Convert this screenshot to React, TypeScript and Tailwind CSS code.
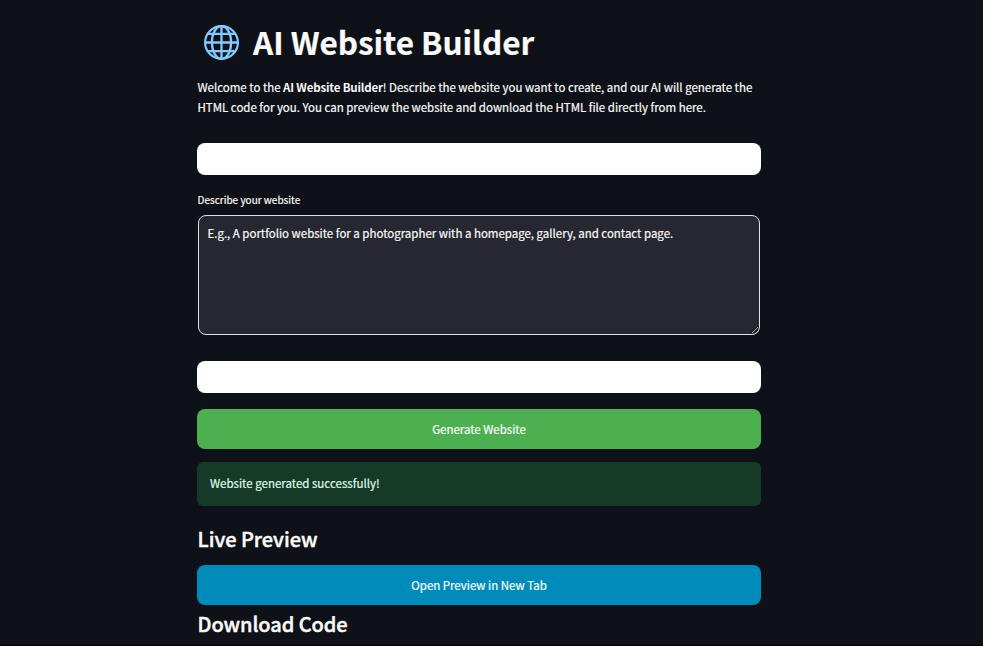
function Globe() {
  return (
    <svg className="mt-[2px] ml-[6px] h-[38px] w-[38px] shrink-0" viewBox="0 0 38 38" fill="none" stroke="#82caff" strokeWidth="2.3">
      <circle cx="18.5" cy="18.5" r="16.4" strokeWidth="2.2" />
      <ellipse cx="18.5" cy="18.5" rx="9.6" ry="16.4" />
      <path d="M18.5 2v33M2 18.5h33M5.2 9.9h26.6M5.2 27.1h26.6" />
    </svg>
  );
}

export default function App() {
  return (
    <div className="h-[646px] overflow-hidden border-b border-black bg-[#0e1117] font-['Noto_Sans_CJK_SC',sans-serif] text-[11.5px] tracking-[-0.018px] text-[#fafafa] [-webkit-text-stroke:0.2px]">
      <main className="ml-[197px] flex w-[564px] flex-col whitespace-nowrap">
        <h1 className="mt-[22px] flex h-10 items-center text-[31.5px] font-bold">
          <Globe />
          <span className="ml-3">AI Website Builder</span>
        </h1>
        <p className="mt-[15px] h-10 pl-[0.5px] leading-5">
          Welcome to the <strong className="font-bold tracking-[-0.17px] [-webkit-text-stroke:0px]">AI Website Builder</strong>! Describe the website you want to create, and our AI will generate the
          <br />
          HTML code for you. You can preview the website and download the HTML file directly from here.
        </p>
        <div className="mt-[26px] h-8 rounded-lg bg-white" />
        <label htmlFor="description" className="mt-4 h-[18px] pl-[0.5px] text-[10px] leading-[18px] tracking-[0.01px]">
          Describe your website
        </label>
        <textarea
          id="description"
          className="mx-px mt-[6px] block h-[120px] resize-y rounded-lg border border-[#e0e0e0] bg-[#262730] px-[8.5px] py-[7px] leading-5 text-[#fafafa] placeholder:text-[#fafafa]"
          placeholder="E.g., A portfolio website for a photographer with a homepage, gallery, and contact page."
        />
        <div className="mt-[26px] h-8 rounded-lg bg-white" />
        <button className="mt-4 h-10 rounded-lg bg-[#4caf50] pt-[2px]">Generate Website</button>
        <div className="mt-[13px] h-11 rounded-md bg-[#173928] px-[13px] leading-[42px] tracking-normal text-[#dffde9]">Website generated successfully!</div>
        <h2 className="mt-[18px] h-[30px] pl-[0.5px] text-[20px] font-medium leading-[30px] [-webkit-text-stroke:0.45px]">Live Preview</h2>
        <button className="mt-[11px] h-10 rounded-lg bg-[#008cba] pt-[2px]">Open Preview in New Tab</button>
        <h2 className="mt-1 h-[30px] pl-[0.5px] text-[20px] font-medium leading-[30px] tracking-[-0.07px] [-webkit-text-stroke:0.45px]">Download Code</h2>
      </main>
    </div>
  );
}
